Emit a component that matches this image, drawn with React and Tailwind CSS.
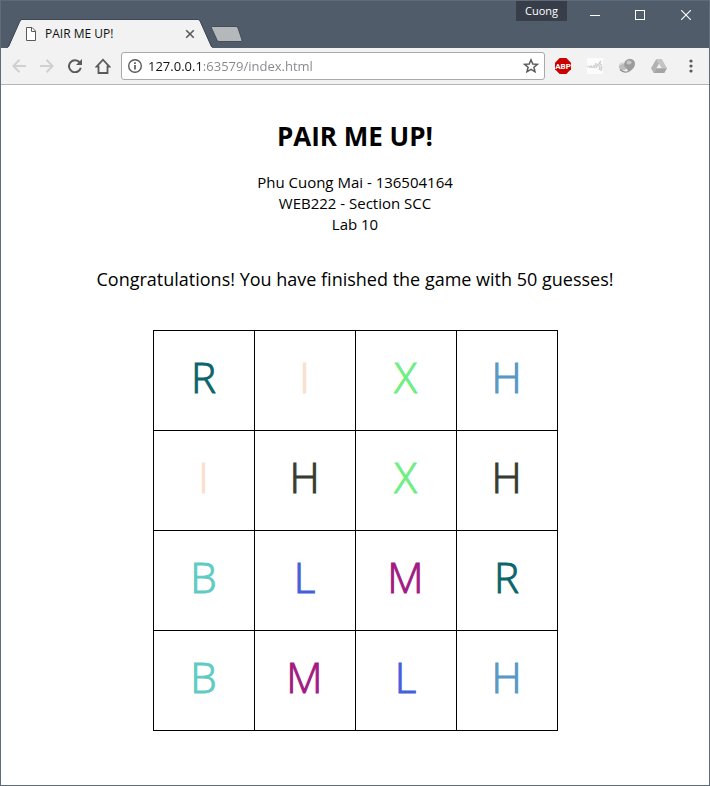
const CARDS = [
  [
    { letter: "R", color: "text-[#0b656d]" },
    { letter: "I", color: "text-[#fae0ce]" },
    { letter: "X", color: "text-[#6eee83]" },
    { letter: "H", color: "text-[#5897c6]" },
  ],
  [
    { letter: "I", color: "text-[#fae0ce]" },
    { letter: "H", color: "text-[#363b31]" },
    { letter: "X", color: "text-[#6eee83]" },
    { letter: "H", color: "text-[#363b31]" },
  ],
  [
    { letter: "B", color: "text-[#5fcbc4]" },
    { letter: "L", color: "text-[#4460da]" },
    { letter: "M", color: "text-[#a21a82]" },
    { letter: "R", color: "text-[#0b656d]" },
  ],
  [
    { letter: "B", color: "text-[#5fcbc4]" },
    { letter: "M", color: "text-[#a21a82]" },
    { letter: "L", color: "text-[#4460da]" },
    { letter: "H", color: "text-[#5897c6]" },
  ],
];

function IconButton({ label, children, disabled }) {
  return (
    <button
      type="button"
      aria-label={label}
      disabled={disabled}
      className="flex h-7 w-7 shrink-0 items-center justify-center"
    >
      {children}
    </button>
  );
}

function ExtensionButton({ label, children }) {
  return (
    <button type="button" aria-label={label} className="flex h-7 w-8 shrink-0 items-center justify-center">
      {children}
    </button>
  );
}

function Tab() {
  return (
    <div role="tablist" className="ml-1.5 flex shrink-0 items-end">
      <div className="relative flex h-[29px] w-[206px] items-center pr-[15px] pl-[18px]">
        <svg viewBox="0 0 206 29" className="absolute inset-0 h-full w-full" aria-hidden="true">
          <path d="M0 29 L2 27.5 L13 2 Q13.6 0.5 15 0.5 H191 Q192.4 0.5 193 2 L204 27.5 L206 29 Z" fill="#f2f2f2" />
          <path d="M0 28.5 L1.5 27.5 L13 2 Q13.6 0.5 15 0.5 H191 Q192.4 0.5 193 2 L204.5 27.5 L206 28.5" fill="none" stroke="#3f4656" />
        </svg>
        <svg viewBox="0 0 12 14" className="relative h-3.5 w-3 shrink-0" fill="#fff" stroke="#5a5a5a" aria-hidden="true">
          <path d="M1.5 .5 H7 L10.5 4 V13.5 H1.5 Z" />
          <path d="M6.5 .5 V4.5 H10.5" fill="none" />
        </svg>
        <span role="tab" aria-selected="true" className="relative ml-2 flex-1 text-xs whitespace-nowrap text-[#111]">
          PAIR ME UP!
        </span>
        <button type="button" aria-label="Close tab" className="relative flex h-4 w-4 items-center justify-center">
          <svg viewBox="0 0 10 10" className="h-2.5 w-2.5" stroke="#5a5a5a" strokeWidth="1.6">
            <path d="M1.2 1.2 L8.8 8.8 M8.8 1.2 L1.2 8.8" />
          </svg>
        </button>
      </div>
      <button type="button" aria-label="New tab" className="mb-1.5 -ml-1">
        <svg viewBox="0 0 34 16" className="h-4 w-[34px]">
          <path d="M3.5 .5 H27 Q28.5 .5 29 2 L33 14 Q33.3 15.5 32 15.5 H10 Q8.5 15.5 8 14 L2.5 2 Q2 .5 3.5 .5 Z" fill="#b4b8bb" stroke="#444d59" />
        </svg>
      </button>
    </div>
  );
}

function TitleBar() {
  return (
    <header className="flex h-12 items-end justify-between border-t border-[#5d6a79] bg-[#505c6a]">
      <Tab />
      <div className="flex items-start self-stretch">
        <button type="button" className="h-5 w-[51px] bg-[#383e49] text-[11px] leading-5 text-white">
          Cuong
        </button>
        <div className="ml-[5px] flex">
          <button type="button" aria-label="Minimize" className="flex h-7 w-[45px] items-center justify-center">
            <svg viewBox="0 0 10 10" className="h-2.5 w-2.5" stroke="#fff">
              <path d="M0 5.5 H10" />
            </svg>
          </button>
          <button type="button" aria-label="Maximize" className="flex h-7 w-[46px] items-center justify-center">
            <svg viewBox="0 0 10 10" className="h-2.5 w-2.5" fill="none" stroke="#fff">
              <rect x=".5" y=".5" width="9" height="9" />
            </svg>
          </button>
          <button type="button" aria-label="Close" className="flex h-7 w-[46px] items-center justify-center">
            <svg viewBox="0 0 10 10" className="h-2.5 w-2.5" stroke="#fff" strokeWidth="1.1">
              <path d="M0 0 L10 10 M10 0 L0 10" />
            </svg>
          </button>
        </div>
      </div>
    </header>
  );
}

function Toolbar() {
  return (
    <div className="flex h-[37px] items-center border-b border-[#b6b6b8] bg-[#f2f2f2] pl-1 text-[#5a5a5a]">
      <IconButton label="Back" disabled>
        <svg viewBox="0 0 14 14" className="h-3.5 w-3.5" fill="none" stroke="#d0d0d0" strokeWidth="2">
          <path d="M14 7 H1.5 M7.5 .8 L1.3 7 L7.5 13.2" />
        </svg>
      </IconButton>
      <IconButton label="Forward" disabled>
        <svg viewBox="0 0 14 14" className="h-3.5 w-3.5" fill="none" stroke="#d0d0d0" strokeWidth="2">
          <path d="M0 7 H12.5 M6.5 .8 L12.7 7 L6.5 13.2" />
        </svg>
      </IconButton>
      <IconButton label="Reload">
        <svg viewBox="0 0 14 14" className="h-3.5 w-3.5" fill="none" stroke="currentColor" strokeWidth="2">
          <path d="M11.8 3.6 A6 6 0 1 0 12.8 8.8" />
          <path d="M14 0 V6 H8 Z" fill="currentColor" stroke="none" />
        </svg>
      </IconButton>
      <IconButton label="Home">
        <svg viewBox="0 0 16 16" className="h-4 w-4" fill="none" stroke="currentColor" strokeWidth="1.8">
          <path d="M1.6 8.6 H3.5 V15 H12.5 V8.6 H14.4 L8 1.7 Z" />
        </svg>
      </IconButton>
      <div className="ml-1 flex h-7 min-w-0 flex-1 items-center rounded-[3px] border border-[#a9a9ab] bg-white pr-[5px] pl-1.5">
        <svg viewBox="0 0 14 14" className="h-3.5 w-3.5 shrink-0" fill="none" stroke="currentColor" aria-hidden="true">
          <circle cx="7" cy="7" r="6.3" strokeWidth="1.4" />
          <path d="M7 6 V10.5 M7 3.2 V4.9" strokeWidth="1.7" />
        </svg>
        <input
          type="text"
          aria-label="Address"
          defaultValue="127.0.0.1:63579/index.html"
          className="ml-1.5 h-6 min-w-0 flex-1 bg-[linear-gradient(to_right,#111_54px,#85858a_54px)] bg-clip-text text-[13px] text-transparent caret-black outline-none"
        />
        <button type="button" aria-label="Bookmark this page" className="flex h-6 w-4 items-center justify-center">
          <svg viewBox="0 0 16 16" className="h-4 w-4" fill="none" stroke="currentColor" strokeWidth="1.5">
            <path d="M8 1.8 L9.8 6 L14.4 6.3 L10.9 9.3 L12 13.8 L8 11.4 L4 13.8 L5.1 9.3 L1.6 6.3 L6.2 6 Z" />
          </svg>
        </button>
      </div>
      <div className="ml-0.5 flex items-center">
        <ExtensionButton label="Adblock Plus">
          <svg viewBox="0 0 16 16" className="h-4 w-4">
            <path d="M4.7 0 H11.3 L16 4.7 V11.3 L11.3 16 H4.7 L0 11.3 V4.7 Z" fill="#cb0000" />
            <text x="8" y="11" textAnchor="middle" fill="#fff" className="font-['Roboto',sans-serif] text-[8px] font-bold">
              ABP
            </text>
          </svg>
        </ExtensionButton>
        <ExtensionButton label="Notes extension">
          <svg viewBox="0 0 16 16" className="h-4 w-4" fill="none" stroke="#cfcfcf">
            <rect width="16" height="16" fill="#fcfcfc" stroke="none" />
            <path d="M0 9 L2 8 L3 10 L4 7.5 L5 10 L7 7 L7 10 L9 5 L9 10 L10.5 6 L11 9" />
            <path d="M11 7 L14 3 M12 5 L15 7 M13 7 L12.5 12 M15 8 L14 13" strokeWidth="1.4" />
          </svg>
        </ExtensionButton>
        <ExtensionButton label="Download extension">
          <svg viewBox="0 0 16 16" className="h-4 w-4">
            <ellipse cx="4" cy="8.5" rx="4" ry="3.8" fill="#bdbdbd" />
            <path d="M1 11.5 Q5 15.5 9 13.5" stroke="#8e8e8e" strokeWidth="1.2" fill="none" />
            <path d="M1 7 Q3 4.5 6 5" stroke="#dedede" fill="none" />
            <path d="M10.5 .8 Q16 1.2 16 6 Q16 10.5 9.2 14.5 Q9.5 12 5.5 8.5 Q4 2 10.5 .8 Z" fill="#9c9c9c" />
            <ellipse cx="10" cy="4.4" rx="2.6" ry="2" fill="#c6c6c6" />
          </svg>
        </ExtensionButton>
        <ExtensionButton label="Drive extension">
          <svg viewBox="0 0 16 16" className="h-4 w-4">
            <path d="M5.3 1 H10.7 L16 10.2 H10.7 Z" fill="#c4c4c4" />
            <path d="M5.3 1 L8 5.7 L2.7 15 L0 10.2 Z" fill="#b2b2b2" />
            <path d="M5.4 10.2 H16 L13.3 15 H2.7 Z" fill="#a4a4a4" />
          </svg>
        </ExtensionButton>
        <ExtensionButton label="Menu">
          <svg viewBox="0 0 4 14" className="h-3.5 w-1" fill="currentColor">
            <circle cx="2" cy="2" r="1.6" />
            <circle cx="2" cy="7" r="1.6" />
            <circle cx="2" cy="12" r="1.6" />
          </svg>
        </ExtensionButton>
        <span className="w-0.5" />
      </div>
    </div>
  );
}

function Board() {
  return (
    <table className="mt-[37px] border-collapse">
      <tbody>
        {CARDS.map((row, r) => (
          <tr key={r}>
            {row.map((card, c) => (
              <td
                key={c}
                className={`h-[100px] w-[101px] border border-black p-0 pb-2 text-center text-[42px] leading-none font-light [-webkit-text-stroke:1px] ${card.color}`}
              >
                {card.letter}
              </td>
            ))}
          </tr>
        ))}
      </tbody>
    </table>
  );
}

export default function App() {
  return (
    <div className="flex min-h-screen flex-col border-x border-b border-[#606c7a] bg-white font-['Open_Sans',sans-serif] text-black">
      <TitleBar />
      <Toolbar />
      <main className="flex flex-1 flex-col items-center pt-8 pb-12 text-center">
        <h1 className="text-[26px] leading-[38px] font-bold">PAIR ME UP!</h1>
        <p className="mt-[17px] text-[15px] leading-[21px]">
          Phu Cuong Mai - 136504164
          <br />
          WEB222 - Section SCC
          <br />
          Lab 10
        </p>
        <p className="mt-[30px] text-lg leading-7">Congratulations! You have finished the game with 50 guesses!</p>
        <Board />
      </main>
    </div>
  );
}
